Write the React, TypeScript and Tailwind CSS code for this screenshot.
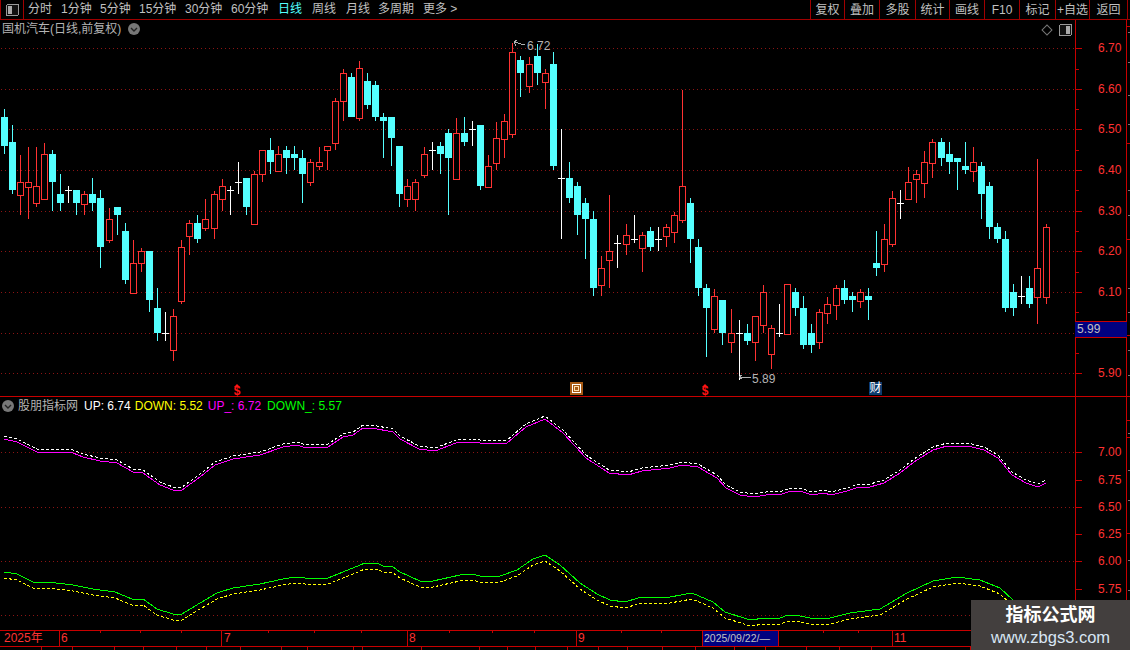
const RED = "#ff3232";
const CYAN = "#54ffff";
const GRID = "#8c1414";

// kind, wick top, body top, body bottom, wick bottom (page pixels)
type Candle = ["c" | "r" | "w", number, number, number, number];

const CANDLES: Candle[] = [
  ["c", 109, 117, 146, 154], ["c", 125, 142, 190, 194], ["r", 155, 182, 195, 215], ["r", 147, 182, 187, 219],
  ["r", 147, 186, 203, 207], ["r", 143, 154, 199, 199], ["c", 150, 154, 182, 211], ["c", 174, 194, 203, 211],
  ["w", 186, 190, 190, 203], ["c", 190, 190, 203, 215], ["r", 191, 194, 204, 215], ["c", 178, 194, 203, 211],
  ["c", 190, 198, 247, 268], ["r", 208, 219, 240, 243], ["c", 207, 207, 215, 235], ["c", 223, 231, 280, 284],
  ["r", 240, 263, 293, 293], ["r", 248, 251, 263, 272], ["c", 251, 251, 300, 312], ["c", 288, 308, 333, 341],
  ["w", 312, 333, 333, 341], ["r", 309, 316, 350, 361], ["r", 240, 247, 301, 304], ["r", 220, 223, 236, 255],
  ["c", 215, 223, 239, 243], ["r", 199, 219, 228, 231], ["r", 191, 194, 228, 239], ["r", 179, 186, 199, 211],
  ["w", 186, 190, 190, 215], ["w", 162, 182, 182, 194], ["c", 178, 178, 207, 215], ["r", 171, 174, 224, 224],
  ["r", 150, 150, 174, 182], ["c", 138, 150, 162, 174], ["r", 146, 154, 171, 171], ["c", 146, 150, 158, 174],
  ["c", 146, 154, 158, 170], ["c", 150, 158, 174, 203], ["r", 159, 162, 182, 186], ["r", 147, 162, 166, 170],
  ["r", 146, 146, 150, 170], ["r", 98, 101, 143, 150], ["r", 69, 73, 101, 121], ["c", 73, 77, 117, 117],
  ["r", 61, 68, 118, 121], ["c", 73, 81, 105, 109], ["c", 81, 85, 117, 121], ["c", 113, 117, 121, 158],
  ["c", 117, 117, 138, 166], ["c", 146, 146, 194, 207], ["r", 179, 186, 199, 207], ["r", 179, 182, 199, 211],
  ["r", 147, 154, 175, 178], ["w", 142, 150, 150, 170], ["c", 142, 146, 154, 174], ["c", 129, 133, 158, 215],
  ["r", 118, 133, 179, 179], ["c", 117, 133, 142, 146], ["w", 121, 129, 129, 146], ["c", 125, 125, 186, 190],
  ["r", 155, 166, 187, 187], ["r", 122, 138, 163, 170], ["r", 114, 121, 139, 158], ["r", 43, 52, 134, 138],
  ["c", 56, 60, 73, 97], ["r", 57, 64, 86, 93], ["c", 44, 56, 73, 85], ["r", 69, 73, 82, 109],
  ["c", 52, 64, 166, 170], ["w", 129, 178, 178, 239], ["c", 162, 178, 198, 203], ["c", 182, 186, 215, 235],
  ["c", 198, 203, 219, 259], ["c", 211, 219, 288, 296], ["r", 256, 268, 285, 296], ["r", 195, 251, 260, 288],
  ["w", 235, 243, 243, 268], ["r", 224, 235, 244, 255], ["w", 215, 239, 239, 243], ["r", 232, 235, 248, 272],
  ["c", 227, 231, 247, 251], ["w", 227, 239, 239, 251], ["r", 224, 227, 236, 247], ["r", 212, 215, 232, 243],
  ["r", 90, 186, 220, 223], ["c", 198, 203, 239, 263], ["c", 239, 247, 288, 296], ["c", 284, 288, 308, 357],
  ["r", 289, 296, 329, 333], ["c", 300, 300, 333, 345], ["r", 309, 333, 342, 353], ["w", 320, 333, 333, 380],
  ["c", 324, 333, 341, 345], ["r", 316, 316, 342, 361], ["r", 285, 292, 325, 333], ["r", 325, 328, 354, 369],
  ["w", 304, 333, 333, 337], ["r", 284, 284, 334, 334], ["c", 288, 292, 308, 316], ["c", 296, 308, 345, 349],
  ["c", 324, 333, 345, 353], ["r", 309, 312, 342, 349], ["r", 297, 304, 313, 324], ["r", 285, 288, 305, 320],
  ["c", 280, 288, 300, 304], ["c", 292, 296, 300, 312], ["r", 289, 292, 301, 308], ["c", 288, 296, 300, 320],
  ["c", 231, 263, 268, 276], ["r", 224, 239, 264, 272], ["r", 191, 198, 244, 247], ["w", 190, 203, 203, 219],
  ["r", 167, 182, 199, 199], ["r", 170, 174, 179, 203], ["r", 151, 162, 183, 198], ["r", 139, 142, 163, 178],
  ["c", 138, 142, 158, 166], ["c", 142, 154, 162, 174], ["c", 158, 158, 162, 190], ["c", 142, 166, 170, 174],
  ["r", 147, 162, 171, 182], ["c", 162, 166, 194, 219], ["c", 182, 186, 227, 239], ["c", 223, 227, 239, 243],
  ["c", 231, 239, 308, 312], ["c", 284, 292, 308, 316], ["w", 276, 296, 296, 304], ["c", 276, 288, 304, 308],
  ["r", 159, 268, 297, 324], ["r", 224, 227, 297, 304],
];

const UP_LINE: [number, number][] = [
  [4, 439], [17, 442], [37, 452], [73, 453], [83, 457], [100, 461], [117, 463], [133, 472], [143, 473], [160, 485],
  [173, 490], [182, 490], [200, 477], [215, 465], [233, 459], [260, 455], [283, 447], [297, 445], [303, 447],
  [328, 447], [343, 437], [353, 435], [363, 428], [372, 428], [393, 432], [400, 439], [419, 449], [435, 451],
  [456, 443], [472, 442], [488, 444], [507, 443], [526, 427], [545, 419], [563, 433], [586, 458], [609, 473],
  [628, 475], [642, 471], [670, 468], [682, 465], [698, 467], [717, 478], [726, 488], [740, 495], [754, 497],
  [772, 494], [782, 494], [791, 491], [800, 491], [812, 495], [824, 493], [831, 495], [847, 491], [859, 487],
  [870, 487], [884, 483], [900, 473], [914, 462], [933, 450], [947, 446], [968, 446], [984, 450], [998, 458],
  [1012, 475], [1026, 483], [1038, 487], [1046, 483],
];

const DOWN_LINE: [number, number][] = [
  [4, 572], [17, 574], [23, 577], [35, 583], [48, 582], [73, 585], [93, 589], [115, 592], [132, 599], [143, 599],
  [157, 609], [173, 614], [182, 614], [200, 603], [217, 593], [233, 588], [260, 584], [283, 579], [295, 577],
  [315, 579], [328, 578], [343, 572], [365, 563], [377, 563], [383, 566], [393, 567], [400, 572], [420, 581],
  [433, 581], [460, 575], [472, 574], [480, 576], [500, 576], [517, 570], [533, 559], [545, 555], [560, 565],
  [580, 583], [597, 594], [610, 600], [625, 602], [638, 598], [653, 597], [670, 597], [692, 593], [713, 602],
  [725, 612], [747, 619], [753, 620], [762, 618], [780, 618], [788, 615], [800, 616], [810, 618], [830, 618],
  [850, 613], [880, 609], [907, 593], [933, 581], [957, 577], [980, 580], [1000, 588], [1013, 600], [1030, 618],
];

const PRICE_AXIS = [
  { label: "6.70", y: 48 }, { label: "6.60", y: 89 }, { label: "6.50", y: 129 }, { label: "6.40", y: 170 },
  { label: "6.30", y: 211 }, { label: "6.20", y: 251 }, { label: "6.10", y: 292 }, { label: "5.90", y: 373 },
];
const PRICE_GRID = [48, 89, 129, 170, 211, 251, 292, 333, 373];
const PRICE_MINOR = [69, 109, 150, 190, 231, 272, 312, 353];

const INDEX_AXIS = [
  { label: "7.00", y: 452 }, { label: "6.75", y: 480 }, { label: "6.50", y: 507 },
  { label: "6.25", y: 534 }, { label: "6.00", y: 561 }, { label: "5.75", y: 589 },
];
const INDEX_GRID = [452, 507, 561, 615];

const PERIODS = ["分时", "1分钟", "5分钟", "15分钟", "30分钟", "60分钟", "日线", "周线", "月线", "多周期", "更多 >"];
const PERIOD_X = [28, 61, 100, 139, 185, 231, 278, 312, 346, 378, 423];
const TOOLS = [
  { label: "复权", w: 34 }, { label: "叠加", w: 35 }, { label: "多股", w: 36 }, { label: "统计", w: 34 }, { label: "画线", w: 35 },
  { label: "F10", w: 35 }, { label: "标记", w: 36 }, { label: "+自选", w: 34 }, { label: "返回", w: 39 },
];

const DATE_TICKS = [100, 140, 181, 268, 314, 361, 449, 492, 534, 621, 661, 823, 858];
const TAB_EDGES = [42, 73, 115, 144, 177, 207, 241, 282, 308, 354, 363, 422, 480, 508, 536, 568, 599, 628, 663, 696, 735, 766, 807, 840, 872, 971];

// little marks in the strip right of the second axis line
const EDGE_RED = [26, 143, 239, 335, 420, 437, 533];
const EDGE_GRAY = [32, 62, 95, 124, 190, 215, 288, 312, 350, 375, 433, 470, 500, 560, 590];

function pts(line: [number, number][], dy = 0) {
  return line.map(([x, y]) => `${x},${y + dy}`).join(" ");
}

function candleX(i: number) {
  return Math.floor(1 + 8.078 * i);
}

function CandleMark({ c, i }: { c: Candle; i: number }) {
  const [kind, wt, bt, bb, wb] = c;
  const x = candleX(i);
  if (kind === "w") {
    return (
      <g fill="#ffffff">
        <rect x={x + 3} y={wt} width={1} height={wb - wt} />
        <rect x={x} y={bt} width={7} height={1} />
      </g>
    );
  }
  if (kind === "c") {
    return (
      <g fill={CYAN}>
        <rect x={x + 3} y={wt} width={1} height={wb - wt} />
        <rect x={x} y={bt} width={7} height={bb - bt} />
      </g>
    );
  }
  return (
    <g>
      <rect x={x + 3} y={wt} width={1} height={wb - wt} fill={RED} />
      <rect x={x + 0.5} y={bt + 0.5} width={6} height={bb - bt} fill="#000" stroke={RED} strokeWidth={1} />
    </g>
  );
}

function Chevron({ className }: { className: string }) {
  return (
    <svg width="12" height="12" viewBox="0 0 12 12" className={className}>
      <circle cx="6" cy="6" r="6" fill="#777" />
      <path d="M3 5 L6 8 L9 5" fill="none" stroke="#222" strokeWidth="1.4" />
    </svg>
  );
}

function PanelIcon({ side }: { side: "left" | "right" }) {
  return (
    <svg width="13" height="12" viewBox="0 0 13 12" shapeRendering="crispEdges">
      <rect x="0.5" y="0.5" width="12" height="11" rx="1.5" fill="#111" stroke="#999" />
      <rect x={side === "left" ? 2 : 7} y="2" width="4" height="8" fill="#aaa" />
    </svg>
  );
}

function Dollar({ x }: { x: number }) {
  return (
    <div className="absolute top-[364px] flex w-[8px] flex-col items-center text-[#ff1414]" style={{ left: x }}>
      <div className="h-0 w-0 border-x-[3px] border-b-[3px] border-x-transparent border-b-[#ff1414]" />
      <span className="text-[12px] leading-[9px] font-bold">$</span>
    </div>
  );
}

function PriceLabel({ label, y, top }: { label: string; y: number; top: number }) {
  return (
    <span className="absolute left-[22px] text-xs leading-[14px] text-[#ff3232]" style={{ top: y - top - 7 }}>
      {label}
    </span>
  );
}

export default function App() {
  return (
    <div
      className="relative flex h-[650px] w-[1130px] flex-col overflow-hidden bg-black text-xs text-[#c0c0c0]"
      style={{ fontFamily: '"Liberation Sans", "Noto Sans CJK SC", sans-serif' }}
    >
      {/* toolbar */}
      <div className="relative flex h-[20px] shrink-0 border-b border-[#a00000]">
        <div className="flex w-[24px] items-center justify-center border-x border-[#a00000]">
          <PanelIcon side="left" />
        </div>
        {PERIODS.map((p, i) => (
          <span
            key={p}
            className={`absolute top-0 leading-[19px] ${p === "日线" ? "text-[#54ffff]" : ""}`}
            style={{ left: PERIOD_X[i] }}
          >
            {p}
          </span>
        ))}
        <div className="ml-auto mr-[2px] flex">
          {TOOLS.map((t) => (
            <div
              key={t.label}
              className="flex items-center justify-center border-l border-[#a00000] last:border-r"
              style={{ width: t.w }}
            >
              {t.label}
            </div>
          ))}
        </div>
      </div>

      {/* price panel */}
      <div className="flex h-[377px] shrink-0 border-b border-[#c80000]">
        <div className="relative w-[1075px] shrink-0">
          <svg width="1075" height="376" viewBox="0 20 1075 376" shapeRendering="crispEdges" className="block">
            {PRICE_GRID.map((y) => (
              <line key={y} x1="1" x2="1075" y1={y + 0.5} y2={y + 0.5} stroke={GRID} strokeDasharray="1 3" />
            ))}
            {CANDLES.map((c, i) => (
              <CandleMark key={i} c={c} i={i} />
            ))}
            <g fill="none" stroke="#b0b0b0">
              <path d="M525 45 L514 42 M514 42 L517 40 M514 42 L516 46" />
              <path d="M751 377 L739 377 M739 377 L742 375 M739 377 L742 379" />
            </g>
          </svg>

          <div className="absolute left-[2px] top-[2px] flex items-center gap-[7px] text-[#b4b4b4]">
            <span className="leading-[14px]">国机汽车(日线,前复权)</span>
            <Chevron className="" />
          </div>
          <div className="absolute right-[3px] top-[4px] flex items-center gap-[7px]">
            <div className="mr-[1px] h-[8px] w-[8px] rotate-45 border border-[#777]" />
            <PanelIcon side="right" />
          </div>

          <span className="absolute left-[527px] top-[19px] leading-[14px] text-[#b4b4b4]">6.72</span>
          <span className="absolute left-[752px] top-[352px] leading-[14px] text-[#b4b4b4]">5.89</span>

          <Dollar x={233} />
          <Dollar x={701} />
          <div className="absolute left-[570px] top-[362px] flex h-[13px] w-[13px] items-center justify-center bg-[#a85a14]">
            <div className="flex h-[9px] w-[9px] items-center justify-center border border-white">
              <div className="h-[5px] w-[5px] border border-[#ffe0b0]" />
            </div>
          </div>
          <div className="absolute left-[869px] top-[362px] h-[13px] w-[13px] bg-[#0c3c6e] text-center text-xs leading-[13px] text-white">
            财
          </div>
        </div>

        <div className="relative w-[52px] shrink-0 border-x border-[#c80000]">
          <svg width="50" height="376" viewBox="0 20 50 376" shapeRendering="crispEdges" className="block" fill="#c80000">
            {PRICE_AXIS.map((p) => (
              <rect key={p.y} x="0" y={p.y} width="6" height="1" />
            ))}
            {PRICE_MINOR.map((y) => (
              <rect key={y} x="0" y={y} width="3" height="1" />
            ))}
          </svg>
          {PRICE_AXIS.map((p) => (
            <PriceLabel key={p.label} label={p.label} y={p.y} top={20} />
          ))}
          <div className="absolute inset-x-[-1px] top-[301px] h-[17px] border-y border-[#c80000] bg-[#000080] pl-[2px] leading-[15px] text-[#c0c0c0]">
            5.99
          </div>
        </div>
      </div>

      {/* indicator panel */}
      <div className="flex h-[234px] shrink-0 border-b border-[#c80000]">
        <div className="relative w-[1075px] shrink-0">
          <svg width="1075" height="233" viewBox="0 397 1075 233" shapeRendering="crispEdges" className="block">
            {INDEX_GRID.map((y) => (
              <line key={y} x1="1" x2="1075" y1={y + 0.5} y2={y + 0.5} stroke={GRID} strokeDasharray="1 3" />
            ))}
            <polyline points={pts(UP_LINE, -3)} fill="none" stroke="#ffffff" strokeDasharray="3 2" />
            <polyline points={pts(UP_LINE)} fill="none" stroke="#ff00ff" />
            <polyline points={pts(DOWN_LINE, 6)} fill="none" stroke="#ffff00" strokeDasharray="3 2" />
            <polyline points={pts(DOWN_LINE)} fill="none" stroke="#00ff00" />
          </svg>
          <div className="absolute left-[2px] top-[2px] flex items-center leading-[14px]">
            <Chevron className="mr-[4px]" />
            <span className="mr-[6px] text-[#b4b4b4]">股朋指标网</span>
            <span className="mr-[4px] text-white">UP: 6.74</span>
            <span className="mr-[5px] text-[#ffff00]">DOWN: 5.52</span>
            <span className="mr-[6px] text-[#ff00ff]">UP_: 6.72</span>
            <span className="text-[#00ff00]">DOWN_: 5.57</span>
          </div>
        </div>
        <div className="relative w-[52px] shrink-0 border-x border-[#c80000]">
          <svg width="50" height="233" viewBox="0 397 50 233" shapeRendering="crispEdges" className="block" fill="#c80000">
            {INDEX_AXIS.map((p) => (
              <rect key={p.y} x="0" y={p.y} width="6" height="1" />
            ))}
          </svg>
          {INDEX_AXIS.map((p) => (
            <PriceLabel key={p.label} label={p.label} y={p.y} top={397} />
          ))}
        </div>
      </div>

      {/* date axis */}
      <div className="relative flex h-[16px] shrink-0 border-b border-[#c80000] leading-[15px] text-[#ff3232]">
        {DATE_TICKS.map((x) => (
          <div key={x} className="absolute top-0 h-[2px] w-px bg-[#c80000]" style={{ left: x }} />
        ))}
        <span className="w-[59px] pl-[4px]">2025年</span>
        <span className="w-[162px] border-l border-[#c80000] pl-[1px]">6</span>
        <span className="w-[186px] border-l border-[#c80000] pl-[2px]">7</span>
        <span className="w-[169px] border-l border-[#c80000] pl-[1px]">8</span>
        <span className="w-[126px] border-l border-[#c80000] pl-[1px]">9</span>
        <span className="w-[77px] overflow-hidden border-x border-[#c80000] bg-[#000080] pl-[1px] text-[10.5px] whitespace-nowrap text-[#c0c0c0]">
          2025/09/22/—
        </span>
        <span className="ml-[113px] border-l border-[#c80000] pl-[1px]">11</span>
      </div>

      {/* tab row, only its top edge is in frame */}
      <div className="flex h-[3px] shrink-0">
        {TAB_EDGES.map((x, i) => (
          <div
            key={x}
            className="h-full border-r border-[#c80000]"
            style={{ width: x - (i === 0 ? 0 : TAB_EDGES[i - 1]) }}
          />
        ))}
      </div>

      {/* edge strip marks */}
      <svg width="3" height="630" viewBox="0 0 3 630" shapeRendering="crispEdges" className="absolute right-0 top-0">
        {EDGE_GRAY.map((y) => (
          <rect key={y} x="1" y={y} width="2" height="1" fill="#777" />
        ))}
        {EDGE_RED.map((y) => (
          <rect key={y} x="0" y={y} width="3" height="1" fill="#c80000" />
        ))}
      </svg>

      {/* watermark */}
      <div className="absolute bottom-0 right-0 flex h-[50px] w-[159px] flex-col items-center bg-[#433f3e]">
        <span className="mt-[3px] text-[18px] leading-[24px] font-bold text-white">指标公式网</span>
        <span className="text-[16.5px] leading-[20px] text-[#d8e6f4]">www.zbgs3.com</span>
      </div>
    </div>
  );
}
